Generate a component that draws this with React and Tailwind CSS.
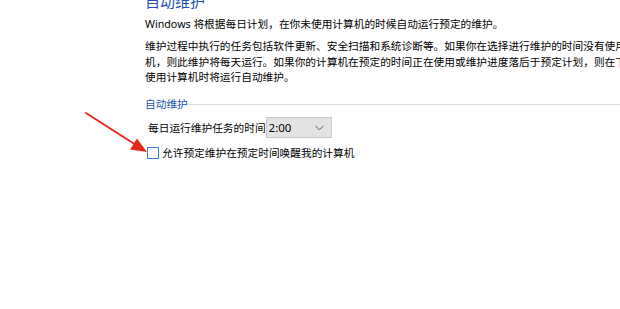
import React from "react";

export default function App() {
  return (
    <div
      className="relative w-[620px] h-[309px] overflow-hidden bg-white text-[#000000]"
      style={{ fontFamily: '"Noto Sans", "Noto Sans CJK SC", sans-serif' }}
    >
      <div className="pl-[145px] flex flex-col">
        <div className="-mt-[9px] h-[20px] text-[15px] leading-[20px] text-[#2350ad]">自动维护</div>
        <p className="mt-[5px] text-[10.7px] leading-[16px] whitespace-nowrap">
          Windows 将根据每日计划，在你未使用计算机的时候自动运行预定的维护。
        </p>
        <p className="mt-[7px] text-[10.7px] leading-[15.5px] whitespace-nowrap">
          维护过程中执行的任务包括软件更新、安全扫描和系统诊断等。如果你在选择进行维护的时间没有使用计算机，
          <br />
          机，则此维护将每天运行。如果你的计算机在预定的时间正在使用或维护进度落后于预定计划，则在下次
          <br />
          使用计算机时将运行自动维护。
        </p>
        <div className="mt-[10px] flex items-center h-[16px]">
          <span className="text-[10.7px] leading-[16px] text-[#2350ad] whitespace-nowrap">自动维护</span>
          <div className="flex-1 h-px bg-[#d3dde6] mt-[1px]" />
        </div>
        <div className="mt-[6px] pl-[3px] flex items-center h-[20px]">
          <span className="text-[10.7px] leading-[16px] whitespace-nowrap">每日运行维护任务的时间</span>
          <div className="w-[66px] h-[21px] bg-[#e3e3e3] border border-[#c9c9c9] flex items-center justify-between pl-[2px] pr-[7px]">
            <span className="text-[11.5px] leading-[16px]">2:00</span>
            <svg width="9" height="6" viewBox="0 0 9 6">
              <path d="M0.5 0.8 L4.5 4.8 L8.5 0.8" fill="none" stroke="#555" strokeWidth="1" />
            </svg>
          </div>
        </div>
        <div className="mt-[9px] pl-[2px] flex items-center h-[13px]">
          <div className="w-[12px] h-[12px] border border-[#2f7fd3] bg-white" />
          <span className="ml-[3px] text-[10.7px] leading-[16px] whitespace-nowrap">允许预定维护在预定时间唤醒我的计算机</span>
        </div>
      </div>
      <svg className="absolute left-0 top-0" width="620" height="309" viewBox="0 0 620 309">
        <line x1="86" y1="113" x2="136" y2="145" stroke="#e8271f" strokeWidth="2" strokeLinecap="round" />
        <polygon points="147,152 130,149.5 137,138.5" fill="#e8271f" />
      </svg>
    </div>
  );
}
